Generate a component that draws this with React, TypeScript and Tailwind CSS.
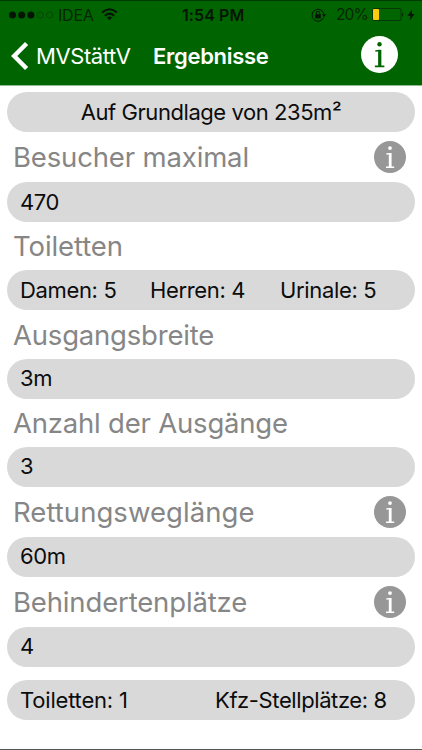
import clsx from "clsx";

type InfoIconProps = {
	className: string;
	markColor: string;
};

const InfoIcon: React.FC<InfoIconProps> = ({ className, markColor }) => (
	<svg viewBox="0 0 32 32" className={clsx("shrink-0", className)} aria-label="Info">
		<circle cx="16" cy="16" r="16" fill="currentColor" />
		<circle cx="16" cy="7.1" r="1.9" fill={markColor} />
		<path d="M12.4 13 L16.2 12.6 M12 26.3 H20.2" fill="none" stroke={markColor} strokeWidth="1.4" />
		<path d="M16.2 12 V26.8" stroke={markColor} strokeWidth="2.8" />
	</svg>
);

const StatusBar: React.FC = () => (
	<div className="flex h-[28px] items-center border-t border-[#003a00] pl-[9px] pr-[7px] text-[16px] leading-none text-[#062606]">
		<svg width="45" height="10" viewBox="0 0 45 10">
			<circle cx="3.5" cy="5" r="3.5" fill="#051505" />
			<circle cx="12.7" cy="5" r="3.5" fill="#051505" />
			<circle cx="21.9" cy="5" r="3.5" fill="#051505" />
			<circle cx="31.2" cy="5" r="3.1" fill="none" stroke="#064006" strokeWidth="0.8" />
			<circle cx="40.5" cy="5" r="3.1" fill="none" stroke="#064006" strokeWidth="0.8" />
		</svg>
		<span className="ml-[4px] w-[36px] whitespace-nowrap tracking-[-0.2px]">IDEA</span>
		<svg width="17" height="13" viewBox="0 0 17 13" className="ml-[7px]">
			<g fill="none" stroke="#051505" strokeWidth="2">
				<path d="M1 4.6 Q8.5 -2 16 4.6" />
				<path d="M3.8 7.7 Q8.5 3.5 13.2 7.7" />
			</g>
			<path d="M5.9 9.4 Q8.5 7.4 11.1 9.4 L8.5 12.3 Z" fill="#051505" />
		</svg>
		<span className="ml-[64px] w-[63px] whitespace-nowrap text-[16px] font-semibold tracking-[0.1px] text-[#051505]">
			1:54 PM
		</span>
		<svg width="16" height="14" viewBox="0 0 16 14" className="ml-[66px]">
			<path d="M12.6 9.5 A6 6 0 1 1 13 6.5" fill="none" stroke="#051505" strokeWidth="1" />
			<path d="M10.8 6.2 H15.4 L13.1 9 Z" fill="#051505" />
			<rect x="4.2" y="6.2" width="5.6" height="4.2" fill="#051505" />
			<path d="M5.3 6.5 V5 a1.7 1.7 0 0 1 3.4 0 V6.5" fill="none" stroke="#051505" />
		</svg>
		<span className="ml-[9px] w-[32px] whitespace-nowrap text-[15.5px] tracking-[-0.9px]">20%</span>
		<svg width="33" height="13" viewBox="0 0 33 13" className="ml-[4px]">
			<rect x="0.5" y="0.5" width="28.5" height="12" rx="1.5" fill="none" stroke="#043804" />
			<rect x="1" y="1" width="6" height="11" rx="1" fill="#fdcb0a" />
			<path d="M30.3 4.2 Q32.3 6.5 30.3 8.8 Z" fill="#051505" />
		</svg>
		<svg width="8" height="12" viewBox="0 0 8 12" className="ml-[2px]">
			<path d="M5.2 0.5 L0.4 6.8 H3.5 L2.6 11.5 L7.6 5 H4.5 Z" fill="#051505" />
		</svg>
	</div>
);

const Header: React.FC = () => (
	<header className="h-[86px] border-b border-[#8dbb8d] bg-[#006500]">
		<StatusBar />
		<nav className="flex h-[54px] items-center pl-[11px] pr-[24px] text-white">
			<svg width="18" height="30" viewBox="0 0 18 30" className="mt-[2px]">
				<path d="M15.6 2.5 L3.2 15 L15.6 27.5" fill="none" stroke="white" strokeWidth="4.5" />
			</svg>
			<span className="ml-[7px] mt-[2px] w-[117px] whitespace-nowrap text-[22px] tracking-[-0.4px]">
				MVStättV
			</span>
			<h1 className="mt-[2px] whitespace-nowrap text-[22px] font-semibold tracking-[-0.3px]">Ergebnisse</h1>
			<InfoIcon className="mb-[1px] ml-auto size-[37px] text-white" markColor="#006500" />
		</nav>
	</header>
);

const Pill: React.FC<{ className?: string; children: React.ReactNode }> = ({ className, children }) => (
	<div
		className={clsx(
			"flex h-[40px] items-center whitespace-nowrap rounded-full bg-[#d9d9d9] px-[13px] text-[22px] tracking-[-0.35px] text-[#0c0c0c]",
			className,
		)}
	>
		{children}
	</div>
);

type HeadingProps = {
	title: string;
	className: string;
	info?: boolean;
};

const Heading: React.FC<HeadingProps> = ({ title, className, info }) => (
	<div className={clsx("flex items-center justify-between pl-[6px] pr-[9px]", className)}>
		<h2 className="mt-[1px] whitespace-nowrap text-[27.5px] leading-none text-[#868686]">{title}</h2>
		{info && <InfoIcon className="size-[32px] text-[#979797]" markColor="#ffffff" />}
	</div>
);

export default function App() {
	return (
		<div className="flex h-[750px] w-[422px] flex-col overflow-hidden border-b border-[#555555] bg-white font-['Inter','Liberation_Sans',sans-serif]">
			<Header />
			<main className="flex flex-col px-[7px] pt-[6px]">
				<Pill className="justify-center tracking-[-0.44px]">Auf Grundlage von 235m²</Pill>
				<Heading title="Besucher maximal" className="h-[50px] tracking-[-0.15px]" info />
				<Pill>470</Pill>
				<Heading title="Toiletten" className="h-[48px] pt-[1px] tracking-[-0.1px]" />
				<Pill>
					<span className="w-[130px]">Damen: 5</span>
					<span className="w-[130px]">Herren: 4</span>
					<span>Urinale: 5</span>
				</Pill>
				<Heading title="Ausgangsbreite" className="h-[48.5px] pt-[1px] tracking-[-0.2px]" />
				<Pill>3m</Pill>
				<Heading title="Anzahl der Ausgänge" className="h-[48.3px] pt-[1px] tracking-[-0.2px]" />
				<Pill>3</Pill>
				<Heading title="Rettungsweglänge" className="h-[50px] tracking-[0.05px]" info />
				<Pill>60m</Pill>
				<Heading title="Behindertenplätze" className="h-[50px] tracking-[-0.15px]" info />
				<Pill>4</Pill>
				<Pill className="mt-[13.5px]">
					<span className="w-[195px] tracking-[-0.2px]">Toiletten: 1</span>
					<span className="tracking-[-0.4px]">Kfz-Stellplätze: 8</span>
				</Pill>
			</main>
		</div>
	);
}
